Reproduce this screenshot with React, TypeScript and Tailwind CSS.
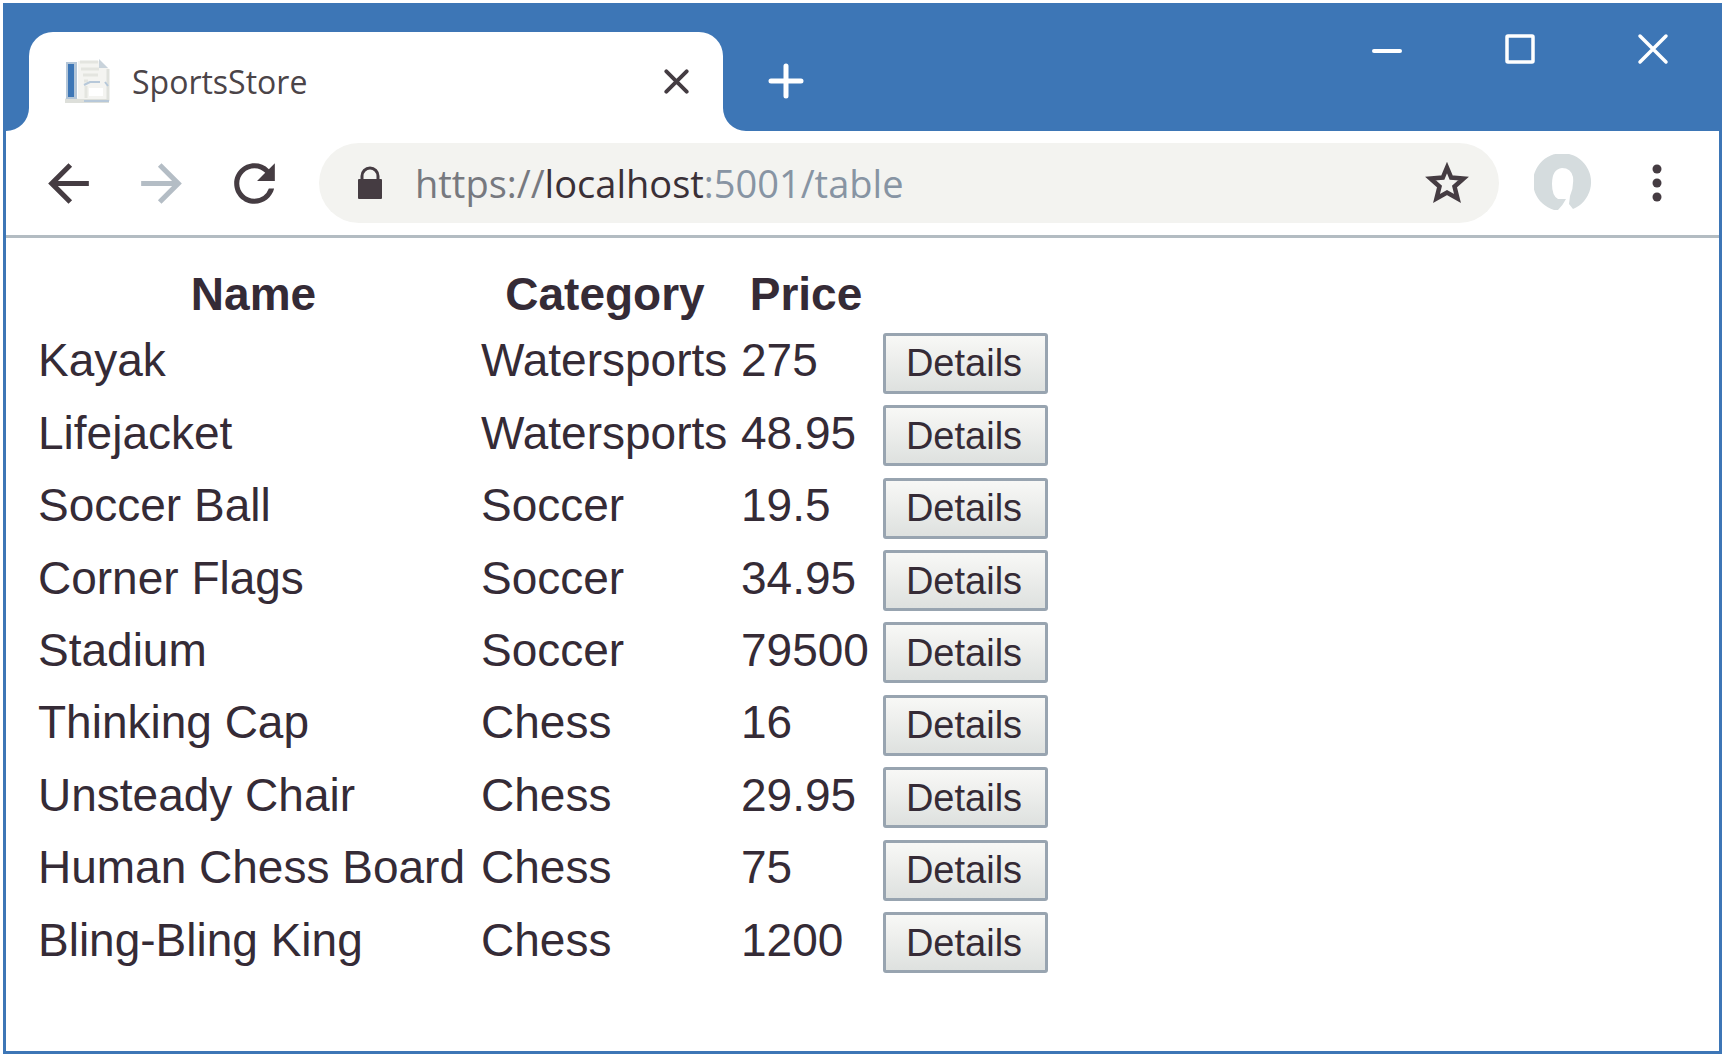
import { MdArrowBack, MdArrowForward, MdRefresh } from "react-icons/md";

type Product = { name: string; category: string; price: string };

const products: Product[] = [
  { name: "Kayak", category: "Watersports", price: "275" },
  { name: "Lifejacket", category: "Watersports", price: "48.95" },
  { name: "Soccer Ball", category: "Soccer", price: "19.5" },
  { name: "Corner Flags", category: "Soccer", price: "34.95" },
  { name: "Stadium", category: "Soccer", price: "79500" },
  { name: "Thinking Cap", category: "Chess", price: "16" },
  { name: "Unsteady Chair", category: "Chess", price: "29.95" },
  { name: "Human Chess Board", category: "Chess", price: "75" },
  { name: "Bling-Bling King", category: "Chess", price: "1200" },
];

function PageIcon() {
  return (
    <svg viewBox="0 0 48 48" className="size-12 shrink-0" aria-hidden="true">
      <path d="M14 3h22l9 8v33H1v-4h13z" fill="#f4f4f1" />
      <path d="M16 4h18M17 11h18M19 17h15M20 23h4M22 28v12" stroke="#e4e5e0" strokeWidth="3" fill="none" />
      <path d="M35 1v9h9z" fill="#c9d3db" />
      <path d="M44 11v32" stroke="#dfe1dc" strokeWidth="3" />
      <path d="M20 27l6-3h10M41 24l3 4" stroke="#b7c8d9" strokeWidth="2" fill="none" />
      <path d="M25 30h14v8H25z" fill="#fff" />
      <path d="M1 43h44" stroke="#dddfda" strokeWidth="4" />
      <path d="M20 43h25" stroke="#b7c8d9" strokeWidth="2" />
      <rect x="2" y="4" width="11" height="37" fill="#b4c6d8" />
      <rect x="4" y="6" width="6" height="33" fill="#3d76b6" />
    </svg>
  );
}

function CrossIcon({ className, width }: { className: string; width: number }) {
  return (
    <svg viewBox="0 0 32 32" className={className} aria-hidden="true">
      <path d="M3 3l26 26M29 3L3 29" stroke="currentColor" strokeWidth={width} strokeLinecap="round" />
    </svg>
  );
}

function TabCurve({ className }: { className: string }) {
  return (
    <svg viewBox="0 0 24 24" className={className} aria-hidden="true">
      <path d="M24 0v24H0A24 24 0 0 0 24 0z" fill="#fff" />
    </svg>
  );
}

function TitleBar() {
  return (
    <header className="flex h-32 bg-[#3d76b6] text-white">
      <div className="flex items-end pt-[29px] pl-[3px]">
        <TabCurve className="size-[23px] shrink-0" />
        <div className="flex h-full w-[694px] items-center rounded-t-[24px] bg-white pr-[34px] pl-[35px]">
          <PageIcon />
          <span className="ml-5 flex-1 text-[32px] leading-10 text-[#4b4448]">SportsStore</span>
          <button type="button" aria-label="Close tab" className="text-[#443c42]">
            <CrossIcon className="size-[25px]" width={5} />
          </button>
        </div>
        <TabCurve className="size-[23px] shrink-0 -scale-x-100" />
      </div>
      <button type="button" aria-label="New tab" className="ml-[22px] self-center pt-[28px]">
        <svg viewBox="0 0 36 36" className="size-9" aria-hidden="true">
          <path d="M18 3v30M3 18h30" stroke="currentColor" strokeWidth="5" strokeLinecap="round" />
        </svg>
      </button>
      <div className="mr-[53px] ml-auto flex h-[92px] items-center gap-[101px]">
        <button type="button" aria-label="Minimize">
          <svg viewBox="0 0 32 32" className="size-8" aria-hidden="true">
            <path d="M3 18h26" stroke="currentColor" strokeWidth="4" strokeLinecap="round" />
          </svg>
        </button>
        <button type="button" aria-label="Maximize">
          <svg viewBox="0 0 32 32" className="size-8" aria-hidden="true">
            <rect x="3" y="3" width="26" height="26" rx="1" fill="none" stroke="currentColor" strokeWidth="3.5" />
          </svg>
        </button>
        <button type="button" aria-label="Close window">
          <CrossIcon className="size-8" width={3.5} />
        </button>
      </div>
    </header>
  );
}

function AddressBar() {
  return (
    <nav className="flex h-[107px] items-center border-b-3 border-[#b3bcc2] pl-8 text-[#453c42]">
      <button type="button" aria-label="Back">
        <MdArrowBack className="size-[61px]" />
      </button>
      <button type="button" aria-label="Forward" className="ml-8 text-[#b4bdc5]">
        <MdArrowForward className="size-[61px]" />
      </button>
      <button type="button" aria-label="Reload" className="ml-8">
        <MdRefresh className="size-[61px]" />
      </button>
      <div className="ml-[34px] flex h-20 flex-1 items-center rounded-full bg-[#f3f3f0] pr-[30px] pl-[38px]">
        <svg viewBox="0 0 26 34" className="h-[34px] w-[26px] shrink-0" aria-hidden="true">
          <path d="M5 15V10a8 8 0 0 1 16 0v5" fill="none" stroke="currentColor" strokeWidth="3" />
          <rect x="1" y="13" width="24" height="20" rx="1" fill="currentColor" />
        </svg>
        <a href="#table" className="ml-8 flex-1 text-[38px] leading-[52px] text-[#8794a3]">
          <span className="text-[#77797f]">https://</span>
          <span className="text-[#3a3037]">localhost</span>:5001/table
        </a>
        <button type="button" aria-label="Bookmark this page">
          <svg viewBox="0 0 44 44" className="size-11" aria-hidden="true">
            <path
              d="M22 6.500L26.200 16.500L38.500 17.500L29.500 25.500L32.500 37.500L22 31.500L11.500 37.500L14.500 25.500L5.500 17.500L17.800 16.500z"
              fill="none"
              stroke="currentColor"
              strokeWidth="4.500"
            />
          </svg>
        </button>
      </div>
      <button type="button" aria-label="Profile" className="ml-[35px]">
        <svg viewBox="0 0 58 58" className="size-[58px]" aria-hidden="true">
          <path
            d="M20 56A29 29 0 1 1 39 55L35 50L36 42Q40 33 39 23Q37 14 28 14Q18 15 18 30Q18 42 24 45L32 45Q29 51 24 56z"
            fill="#d5dcde"
          />
        </svg>
      </button>
      <button type="button" aria-label="Menu" className="mr-[57px] ml-[60px]">
        <svg viewBox="0 0 10 40" className="h-10 w-[10px]" aria-hidden="true">
          <circle cx="5" cy="6" r="4.500" fill="currentColor" />
          <circle cx="5" cy="20" r="4.500" fill="currentColor" />
          <circle cx="5" cy="34" r="4.500" fill="currentColor" />
        </svg>
      </button>
    </nav>
  );
}

function ProductTable() {
  return (
    <table className="h-[718px] table-fixed text-[46px] leading-[54px]">
      <colgroup>
        <col className="w-[443px]" />
        <col className="w-[260px]" />
        <col className="w-[142px]" />
        <col className="w-[165px]" />
      </colgroup>
      <thead>
        <tr className="h-[66px]">
          <th scope="col" className="pr-3 font-bold">Name</th>
          <th scope="col" className="pr-3 font-bold">Category</th>
          <th scope="col" className="pr-3 font-bold">Price</th>
          <td />
        </tr>
      </thead>
      <tbody>
        {products.map((p) => (
          <tr key={p.name}>
            <td className="pb-[6px] whitespace-nowrap">{p.name}</td>
            <td className="pb-[6px]">{p.category}</td>
            <td className="pb-[6px]">{p.price}</td>
            <td>
              <button
                type="button"
                aria-label={`Details of ${p.name}`}
                className="block h-[61px] w-full rounded-[3px] border-3 border-[#98a4b0] bg-linear-to-b from-[#f8f8f6] to-[#dee1df] pr-[3px] text-[38px] leading-[44px]"
              >
                Details
              </button>
            </td>
          </tr>
        ))}
      </tbody>
    </table>
  );
}

export default function App() {
  return (
    <div className="min-h-screen bg-white p-[3px] font-['Open_Sans',sans-serif]">
      <div className="flex min-h-[1051px] flex-col bg-white">
        <TitleBar />
        <div className="flex flex-1 flex-col border-x-3 border-b-3 border-[#3d76b6]">
          <AddressBar />
          <main className="pt-[23px] pl-8 font-['Liberation_Sans',Arial,sans-serif] text-[#352b36]">
            <ProductTable />
          </main>
        </div>
      </div>
    </div>
  );
}
